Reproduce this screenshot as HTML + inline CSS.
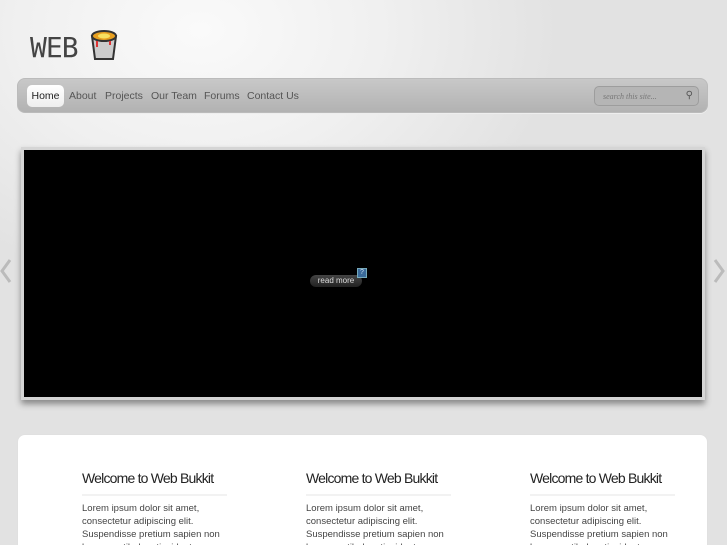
<!DOCTYPE html>
<html style="overflow:hidden;height:545px"><head><style>
*{margin:0;padding:0;box-sizing:border-box}
body{width:727px;height:545px;overflow:hidden;font-family:"Liberation Sans",sans-serif;background:radial-gradient(ellipse 360px 260px at 200px 30px,#fafafa 0%,#f0f0f0 50%,#e2e2e2 100%);position:relative}
.logo{position:absolute;left:30px;top:31px;font-family:"DejaVu Sans Mono",monospace;font-size:28px;color:#444;letter-spacing:-1px}
.bucket{position:absolute;left:89px;top:29px;width:30px;height:32px}
.nav{position:absolute;left:17px;top:78px;width:691px;height:35px;border-radius:8px;background:linear-gradient(#c8c8c8,#b2b2b2);border:1px solid #bbb;box-shadow:0 1px 0 #eee}
.nav a{position:absolute;top:11px;font-size:10.5px;color:#555}
.home{position:absolute;left:9px;top:6px;width:37px;height:22px;border-radius:5px;background:linear-gradient(#fff,#eee);font-size:10.5px;color:#222;text-align:center;line-height:22px}
.search{position:absolute;left:576px;top:7px;width:105px;height:20px;border-radius:5px;background:#b5b5b5;border:1px solid #9d9d9d;font:italic 8px "Liberation Serif",serif;color:#777;padding:5px 0 0 8px}
.slide{position:absolute;left:21px;top:147px;width:684px;height:253px;background:#000;border:3px solid #d5d5d5;box-shadow:0 4px 6px #888}
.rm{position:absolute;left:286px;top:125px;width:52px;height:12px;border-radius:6px;background:linear-gradient(#444,#222);color:#ddd;font-size:8px;text-align:center;line-height:12px}
.q{position:absolute;left:333px;top:118px;width:10px;height:10px;background:#3a6a9a;border:1px solid #7ab;font-size:7px;color:#cde;text-align:center;line-height:8px}
.arr{position:absolute;top:258px}
.box{position:absolute;left:17px;top:434px;width:691px;height:120px;background:#fff;border-radius:8px 8px 0 0;border:1px solid #e0e0e0}
.col{position:absolute;top:35px;width:145px}
.col h2{font-size:14px;font-weight:normal;color:#222;letter-spacing:-0.8px;padding-bottom:8px;border-bottom:2px solid #f2f2f2}
.col p{font-size:9.5px;color:#444;line-height:13px;margin-top:6px}
</style></head><body>
<div class="logo">WEB</div>
<svg class="bucket" viewBox="0 0 30 32"><path d="M3 7h24l-3 23H6z" fill="#ccc" stroke="#333" stroke-width="2"/><ellipse cx="15" cy="7" rx="12" ry="5" fill="#e8a020" stroke="#333" stroke-width="2"/><ellipse cx="15" cy="7" rx="6" ry="2.5" fill="#f8e060"/><path d="M8 12v6M21 12v4" stroke="#d33" stroke-width="2"/></svg>
<div class="nav">
<div class="home">Home</div>
<a style="left:51px">About</a><a style="left:87px">Projects</a><a style="left:133px">Our Team</a><a style="left:186px">Forums</a><a style="left:229px">Contact Us</a>
<div class="search">search this site...<span style="position:absolute;right:5px;top:3px;font:10px sans-serif;color:#555">⚲</span></div>
</div>
<div class="slide"><div class="rm">read more</div><div class="q">?</div></div>
<svg class="arr" style="left:0" width="12" height="26"><path d="M10 2L2 13l8 11" fill="none" stroke="#bbb" stroke-width="3"/></svg>
<svg class="arr" style="left:713px" width="12" height="26"><path d="M2 2l8 11-8 11" fill="none" stroke="#bbb" stroke-width="3"/></svg>
<div class="box">
<div class="col" style="left:64px"><h2>Welcome to Web Bukkit</h2><p>Lorem ipsum dolor sit amet, consectetur adipiscing elit. Suspendisse pretium sapien non lorem vestibulum tincidunt.</p></div>
<div class="col" style="left:288px"><h2>Welcome to Web Bukkit</h2><p>Lorem ipsum dolor sit amet, consectetur adipiscing elit. Suspendisse pretium sapien non lorem vestibulum tincidunt.</p></div>
<div class="col" style="left:512px"><h2>Welcome to Web Bukkit</h2><p>Lorem ipsum dolor sit amet, consectetur adipiscing elit. Suspendisse pretium sapien non lorem vestibulum tincidunt.</p></div>
</div>
</body></html>
